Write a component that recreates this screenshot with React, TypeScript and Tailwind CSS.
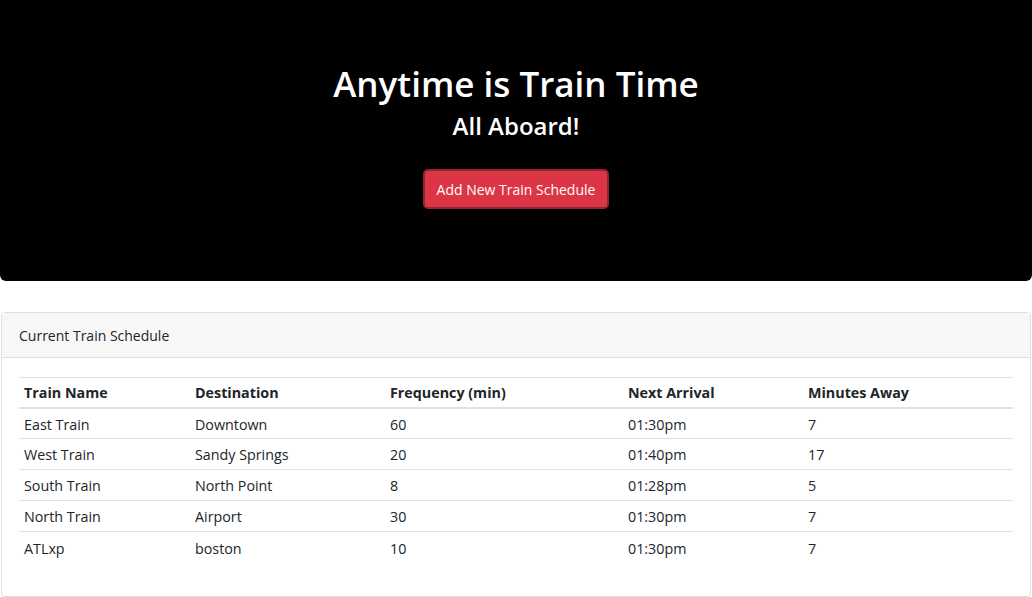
const trains = [
  { name: "East Train", dest: "Downtown", freq: "60", next: "01:30pm", away: "7" },
  { name: "West Train", dest: "Sandy Springs", freq: "20", next: "01:40pm", away: "17" },
  { name: "South Train", dest: "North Point", freq: "8", next: "01:28pm", away: "5" },
  { name: "North Train", dest: "Airport", freq: "30", next: "01:30pm", away: "7" },
  { name: "ATLxp", dest: "boston", freq: "10", next: "01:30pm", away: "7" },
];

const App = () => {
  return (
    <div className="min-h-[597px] bg-white text-[#212529] font-['Open_Sans',sans-serif]">
      <div className="h-[281px] bg-black rounded-b-[6px] flex flex-col items-center pt-[60px] text-white">
        <h1 className="text-[35px] leading-[48px] font-semibold">Anytime is Train Time</h1>
        <h2 className="text-[24px] leading-[32px] font-semibold mt-[2px]">All Aboard!</h2>
        <button className="mt-[27px] h-[40px] px-[12px] bg-[#dc3545] border-2 border-[#8f2533] rounded-[5px] text-[14px] text-white">
          Add New Train Schedule
        </button>
      </div>

      <div className="mt-[31px] mx-[1px] border border-[#dfdfdf] rounded-[4px] h-[285px]">
        <div className="h-[45px] bg-[#f7f7f7] border-b border-[#dfdfdf] px-[17px] flex items-center text-[14px]">
          Current Train Schedule
        </div>
        <div className="px-[17px] pt-[19px]">
          <table className="w-full border-collapse text-[14.3px]">
            <thead>
              <tr className="border-t border-[#dee2e6] border-b-2 border-b-[#dee2e6]">
                <th className="w-[171px] text-left font-bold px-[5px] h-[30px] pt-[1px]">Train Name</th>
                <th className="w-[195px] text-left font-bold px-[5px] pt-[1px]">Destination</th>
                <th className="w-[238px] text-left font-bold px-[5px] pt-[1px]">Frequency (min)</th>
                <th className="w-[180px] text-left font-bold px-[5px] pt-[1px]">Next Arrival</th>
                <th className="text-left font-bold px-[5px] pt-[1px]">Minutes Away</th>
              </tr>
            </thead>
            <tbody>
              {trains.map((t, i) => (
                <tr key={i} className={i > 0 ? "border-t border-[#dee2e6]" : ""}>
                  <td className="px-[5px] h-[31px] pt-[2px]">{t.name}</td>
                  <td className="px-[5px] pt-[2px]">{t.dest}</td>
                  <td className="px-[5px] pt-[2px]">{t.freq}</td>
                  <td className="px-[5px] pt-[2px]">{t.next}</td>
                  <td className="px-[5px] pt-[2px]">{t.away}</td>
                </tr>
              ))}
            </tbody>
          </table>
        </div>
      </div>
    </div>
  );
};

export default App;
